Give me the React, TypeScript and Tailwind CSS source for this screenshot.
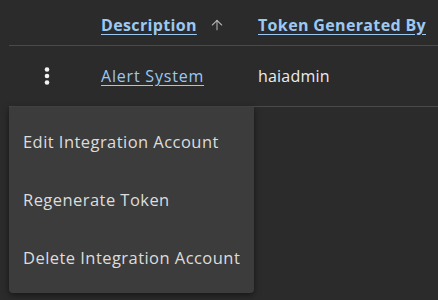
import { ArrowUp } from "lucide-react";

const menuItems = [
	"Edit Integration Account",
	"Regenerate Token",
	"Delete Integration Account",
];

export default function App() {
	return (
		<div className="relative h-[300px] w-[438px] overflow-hidden bg-[#2b2b2b] font-['Open_Sans',sans-serif]">
			<div className="ml-[9px]">
				<div className="grid h-[46px] grid-cols-[92px_157px_1fr] items-center border-b border-[#4a4a4a] pt-[4px] text-[16px] font-bold tracking-[0.35px] text-[#9cc8f2]">
					<div />
					<div className="flex items-center gap-[12px]">
						<span className="underline underline-offset-[3px]">Description</span>
						<ArrowUp className="h-[16px] w-[16px] text-[#b0b0b0]" strokeWidth={1.6} />
					</div>
					<span className="whitespace-nowrap underline underline-offset-[3px]">Token Generated By</span>
				</div>
				<div className="grid h-[61px] grid-cols-[92px_157px_1fr] items-center border-b border-[#4a4a4a] text-[16px]">
					<div className="flex pl-[35px]">
						<svg width="6" height="18" viewBox="0 0 6 18" fill="#f2f2f2">
							<circle cx="3" cy="2.5" r="2.3" />
							<circle cx="3" cy="9" r="2.3" />
							<circle cx="3" cy="15.5" r="2.3" />
						</svg>
					</div>
					<span className="tracking-[0.8px] text-[#9cc8f2] underline underline-offset-[3px]">Alert System</span>
					<span className="tracking-[0.2px] text-[#ececec]">haiadmin</span>
				</div>
			</div>
			<div className="absolute left-[9px] top-[107px] flex w-[245px] flex-col rounded-b-[4px] bg-[#3c3c3c] py-[6px] shadow-[0_2px_6px_rgba(0,0,0,0.5)]">
				{menuItems.map((item) => (
					<div key={item} className="flex h-[58px] items-center whitespace-nowrap px-[14px] text-[16.5px] tracking-[0.45px] text-[#dcdcdc]">
						{item}
					</div>
				))}
			</div>
		</div>
	);
}
